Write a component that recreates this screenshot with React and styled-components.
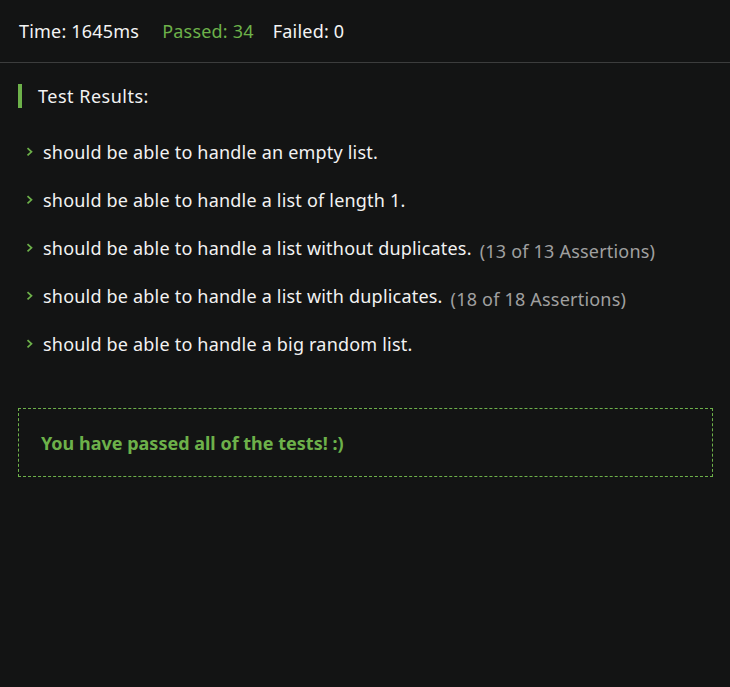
import React from "react";
import styled, { createGlobalStyle } from "styled-components";

const GlobalStyle = createGlobalStyle`
  html, body {
    margin: 0;
    padding: 0;
    background: #131414;
  }
  body {
    font-family: "Noto Sans", "Open Sans", sans-serif;
    color: #f2f2f2;
  }
`;

const Page = styled.div`
  min-height: 687px;
  background: #131414;
`;

const Header = styled.div`
  display: flex;
  align-items: center;
  height: 61px;
  padding: 0 19px 1px;
  border-bottom: 1px solid #3c3d3d;
  font-size: 18px;
  letter-spacing: 0.2px;
`;

const Stat = styled.span`
  margin-right: ${(p) => p.$gap || 0}px;
  color: ${(p) => (p.$green ? "#6db14a" : "#f4f4f4")};
`;

const Body = styled.div`
  padding: 21px 17px 0 18px;
`;

const Title = styled.div`
  display: flex;
  align-items: center;
  height: 24px;
  padding-left: 16px;
  border-left: 4px solid #6db14a;
  font-size: 18px;
  letter-spacing: 0.5px;
`;

const List = styled.ul`
  list-style: none;
  margin: 32px 0 0;
  padding: 0;
`;

const Item = styled.li`
  display: flex;
  align-items: flex-start;
  height: 48px;
  line-height: 24px;
  padding-left: 8px;
  font-size: 18px;
  letter-spacing: 0.2px;
`;

const Chevron = styled.svg`
  flex: none;
  width: 8px;
  height: 10px;
  margin: 7px 9px 0 0;
`;

const Assertions = styled.span`
  margin: 3px 0 0 8px;
  color: #a0a0a0;
`;

const Done = styled.div`
  display: flex;
  align-items: center;
  height: 67px;
  margin-top: 28px;
  padding: 0 22px;
  border: 1px dashed #6db14a;
  color: #6db14a;
  font-size: 18px;
  font-weight: 700;
`;

const tests = [
  { name: "should be able to handle an empty list." },
  { name: "should be able to handle a list of length 1." },
  { name: "should be able to handle a list without duplicates.", count: 13 },
  { name: "should be able to handle a list with duplicates.", count: 18 },
  { name: "should be able to handle a big random list." },
];

export default function App() {
  return (
    <Page>
      <GlobalStyle />
      <Header>
        <Stat $gap={23}>Time: 1645ms</Stat>
        <Stat $gap={19} $green>
          Passed: 34
        </Stat>
        <Stat>Failed: 0</Stat>
      </Header>
      <Body>
        <Title>Test Results:</Title>
        <List>
          {tests.map((t) => (
            <Item key={t.name}>
              <Chevron viewBox="0 0 8 10">
                <path d="M1.5 1.2 L5.5 4.8 L1.5 8.4" fill="none" stroke="#6db14a" strokeWidth="1.7" />
              </Chevron>
              <span>{t.name}</span>
              {t.count && (
                <Assertions>
                  ({t.count} of {t.count} Assertions)
                </Assertions>
              )}
            </Item>
          ))}
        </List>
        <Done>You have passed all of the tests! :)</Done>
      </Body>
    </Page>
  );
}
